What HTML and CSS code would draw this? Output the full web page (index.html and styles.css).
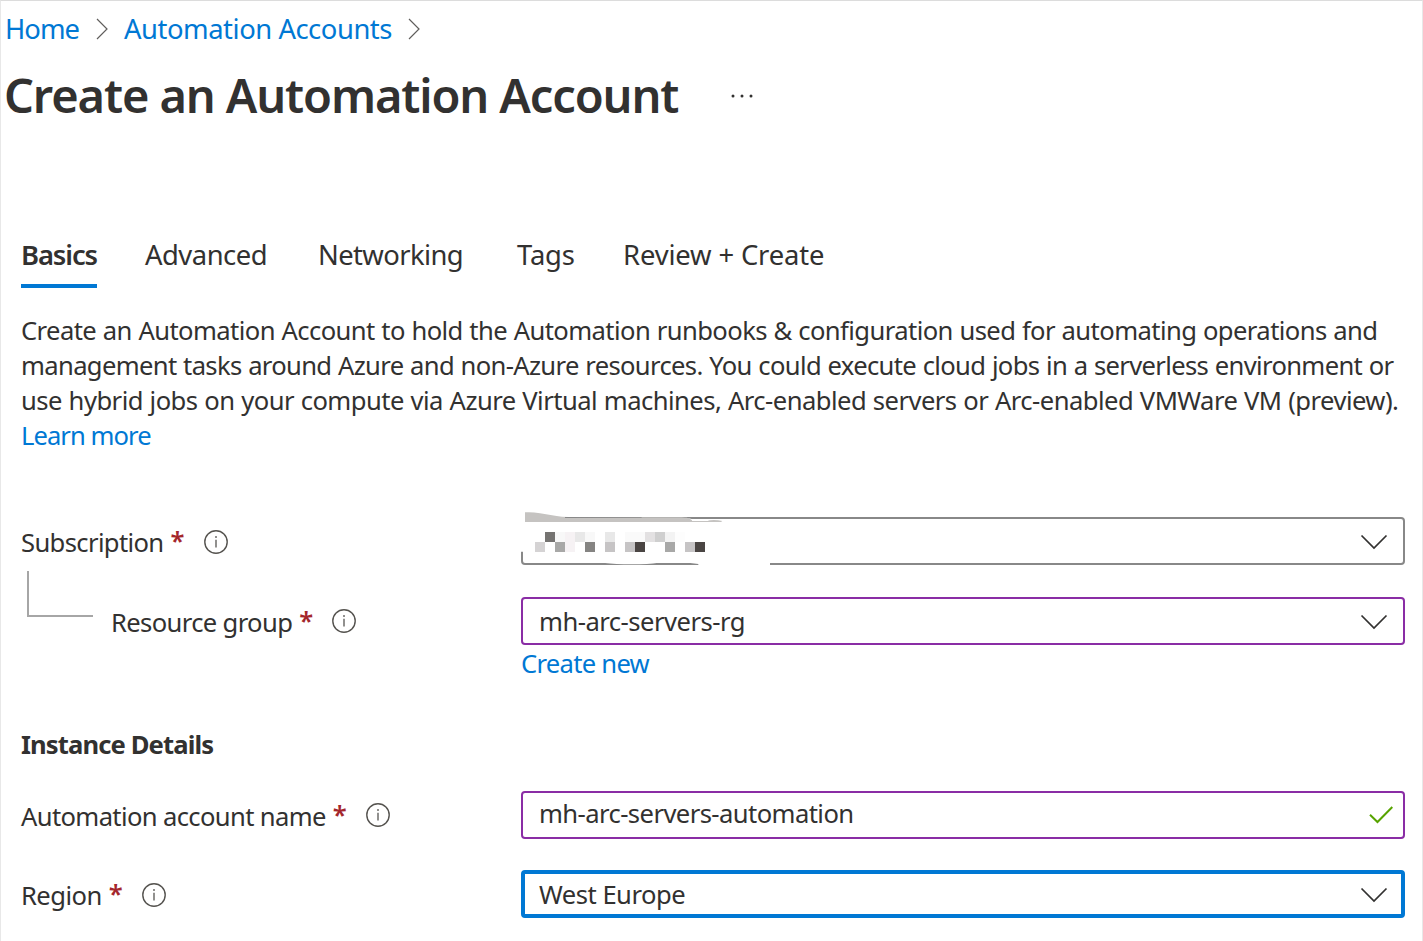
FILE: index.html
```html
<!DOCTYPE html>
<html lang="en">
<head>
<meta charset="utf-8">
<title>Create an Automation Account</title>
<link rel="stylesheet" href="styles.css">
</head>
<body>
<svg class="symbols" width="0" height="0">
  <symbol id="info" viewBox="0 0 24 24"><circle cx="12" cy="12" r="11.2" fill="none" stroke="#55534f" stroke-width="1.4"/><path d="M12 9.700V17.600" stroke="#6d6b69" stroke-width="1.5"/><circle cx="12" cy="7" r="1" fill="#6d6b69"/></symbol>
  <symbol id="down" viewBox="0 0 28 16"><path d="M1.500 1.500L14 14L26.500 1.500" fill="none" stroke="#323130" stroke-width="1.7"/></symbol>
  <symbol id="right" viewBox="0 0 12 22"><path d="M1 1L11 11L1 21" fill="none" stroke="#605e5c" stroke-width="1.2"/></symbol>
</svg>
<div class="page">
  <nav class="crumbs">
    <a class="home">Home</a><svg class="sep"><use href="#right"/></svg>
    <a class="accounts">Automation Accounts</a><svg class="sep"><use href="#right"/></svg>
  </nav>
  <header class="title-row">
    <h1 class="title">Create an Automation Account</h1>
    <svg class="more" viewBox="0 0 24 6"><g fill="#323130"><circle cx="3" cy="3" r="1.5"/><circle cx="12" cy="3" r="1.500"/><circle cx="21" cy="3" r="1.500"/></g></svg>
  </header>
  <nav class="tabs">
    <a class="tab active">Basics</a>
    <a class="tab advanced">Advanced</a>
    <a class="tab networking">Networking</a>
    <a class="tab tags">Tags</a>
    <a class="tab review">Review + Create</a>
  </nav>
  <p class="intro">
    <span class="line first">Create an Automation Account to hold the Automation runbooks &amp; configuration used for automating operations and</span>
    <span class="line second">management tasks around Azure and non-Azure resources. You could execute cloud jobs in a serverless environment or</span>
    <span class="line third">use hybrid jobs on your compute via Azure Virtual machines, Arc-enabled servers or Arc-enabled VMWare VM (preview).</span>
    <a class="line learn">Learn more</a>
  </p>
  <form class="form">
    <div class="row subscription">
      <label class="label"><span class="caption">Subscription</span><span class="star">*</span><svg class="info"><use href="#info"/></svg></label>
      <div class="field gray"><svg class="chev"><use href="#down"/></svg>
        <svg class="redact" viewBox="0 0 810 210">
          <path fill="#fff" d="M0 0H520V36H525L540 45H640V172H765V190H550V177L520 173H430Q400 178 350 178T270 174H30L24 140H0Z"/>
          <path fill="#c5c3c1" d="M30 22Q50 20 75 25L125 33Q140 36 160 36H510Q522 38 531 46L575 47Q600 43 622 48L618 51H30Z"/>
          <path fill="#fff" d="M531 43L580 45V48H531Z"/>
          <path fill="#888" d="M150 36H380V38L150 39ZM380 36H810V42H530Q515 37 500 37H380Z"/>
          <g shape-rendering="crispEdges">
            <path fill="#757371" d="M90 81h30v30h-30z"/><path fill="#f8f8f8" d="M120 81h30v30h-30zM210 81h30v30h-30z"/>
            <path fill="#f6f2f4" d="M150 81h30v60h-30z"/><path fill="#e8e8e8" d="M180 81h30v30h-30zM270 81h30v30h-30z"/>
            <path fill="#fafafa" d="M330 81h60v30h-60z"/><path fill="#e3e1e2" d="M390 81h30v30h-30z"/>
            <path fill="#cfcfcf" d="M420 81h30v30h-30z"/><path fill="#f3f3f3" d="M450 81h30v30h-30z"/><path fill="#fdfdfd" d="M480 81h30v30h-30z"/>
            <path fill="#d5d3d4" d="M60 111h30v30h-30z"/><path fill="#a8a8a7" d="M120 111h30v30h-30zM450 111h30v30h-30z"/>
            <path fill="#858482" d="M210 111h30v30h-30z"/><path fill="#c6c4c5" d="M270 111h30v30h-30zM330 111h30v30h-30zM510 111h30v30h-30z"/>
            <path fill="#4a4543" d="M360 111h30v30h-30zM540 111h30v30h-30z"/>
          </g>
        </svg>
      </div>
    </div>
    <div class="row group">
      <label class="label"><i class="elbow"></i><span class="caption">Resource group</span><span class="star">*</span><svg class="info"><use href="#info"/></svg></label>
      <div class="field purple"><span class="value-group">mh-arc-servers-rg</span><svg class="chev"><use href="#down"/></svg></div>
    </div>
    <a class="create">Create new</a>
    <h2 class="section">Instance Details</h2>
    <div class="row name">
      <label class="label"><span class="caption">Automation account name</span><span class="star">*</span><svg class="info"><use href="#info"/></svg></label>
      <div class="field purple"><span class="value-name">mh-arc-servers-automation</span><svg class="check" viewBox="0 0 24 18"><path d="M1 8.700L8.500 16L23.300 1" fill="none" stroke="#57a300" stroke-width="2"/></svg></div>
    </div>
    <div class="row region">
      <label class="label"><span class="caption">Region</span><span class="star">*</span><svg class="info"><use href="#info"/></svg></label>
      <div class="field blue"><span class="value-region">West Europe</span><svg class="chev"><use href="#down"/></svg></div>
    </div>
  </form>
</div>
</body>
</html>
```
FILE: styles.css
```css
* { box-sizing: border-box; }
body { margin: 0; background: #fff; color: #323130; font: 25.6px/35px "Noto Sans", "Open Sans", sans-serif; white-space: nowrap; }
svg { flex: none; }
a { color: #0078d4; }
.symbols { position: absolute; }
.page { width: 1423px; height: 941px; overflow: hidden; border-top: 1px solid #dcdcdc; border-left: 1px solid #e8e8e8; border-right: 1px solid #e8e8e8; }

.crumbs { display: flex; align-items: center; height: 54px; padding-left: 4px; font-size: 27.4px; }
.home { width: 75px; letter-spacing: -0.98px; }
.accounts { width: 268px; letter-spacing: -0.46px; }
.sep { width: 12px; height: 22px; margin: 2px 16px 0; }

.title-row { display: flex; align-items: center; height: 80px; padding-left: 3px; }
.title { width: 675px; margin: 0; font-size: 47px; font-weight: 600; letter-spacing: -1.12px; }
.more { width: 24px; height: 6px; margin: 2px 0 0 51px; }

.tabs { display: flex; margin: 88px 0 0 20px; font-size: 27.4px; }
.tab { height: 65px; line-height: 64px; color: #323130; }
.active { width: 76px; margin-right: 48px; border-bottom: 4px solid #0078d4; font-weight: 600; letter-spacing: -1.1px; }
.advanced { width: 173px; letter-spacing: -0.5px; }
.networking { width: 199px; letter-spacing: -0.6px; }
.tags { width: 106px; letter-spacing: -0.15px; }
.review { letter-spacing: -0.15px; }

.intro { margin: 25px 0 0 20px; }
.line { display: block; width: max-content; }
.first { letter-spacing: -0.58px; word-spacing: 0.5px; }
.second { letter-spacing: -0.66px; word-spacing: 0.6px; }
.third { letter-spacing: -0.54px; word-spacing: 0.6px; }
.learn { letter-spacing: -0.95px; }

.form { margin: 64px 0 0 20px; }
.row { display: flex; align-items: center; height: 48px; }
.group { margin-top: 32px; }
.name { margin-top: 29px; }
.region { margin-top: 31px; }
.label { display: flex; align-items: center; width: 500px; height: 48px; letter-spacing: -0.64px; }
.caption { padding-top: 3px; }
.region .caption { letter-spacing: -0.55px; }
.star { width: 13px; margin: 0 20px 2px 7px; color: #a4262c; font-weight: 600; letter-spacing: 0; }
.info { width: 24px; height: 24px; }
.subscription .info, .region .info { margin-top: 2px; }
.elbow { align-self: flex-start; width: 66px; height: 46px; margin: -26px 18px 0 6px; border: solid #a6a6a6; border-width: 0 0 2px 2px; }

.field { display: flex; align-items: center; position: relative; width: 884px; height: 48px; padding: 0 15px 0 16px; border: 2px solid; border-radius: 4px; }
.gray { border-color: #888; }
.purple { border-color: #8a2da5; }
.blue { padding: 0 13px 0 14px; border: 4px solid #0078d4; }
.chev { width: 28px; height: 16px; margin: 1px 0 0 auto; }
.name .field { padding-right: 10px; }
.check { width: 24px; height: 18px; margin-left: auto; }
.redact { position: absolute; left: -8px; top: -14px; width: 270px; height: 70px; }
.value-group { letter-spacing: -0.52px; }
.value-name { margin-bottom: 3px; letter-spacing: -0.58px; }
.value-region { letter-spacing: -0.5px; }

.create { display: block; margin: 1px 0 0 500px; letter-spacing: -0.72px; }
.section { margin: 46px 0 0; font-size: 25.6px; font-weight: 700; letter-spacing: -0.88px; }
```
